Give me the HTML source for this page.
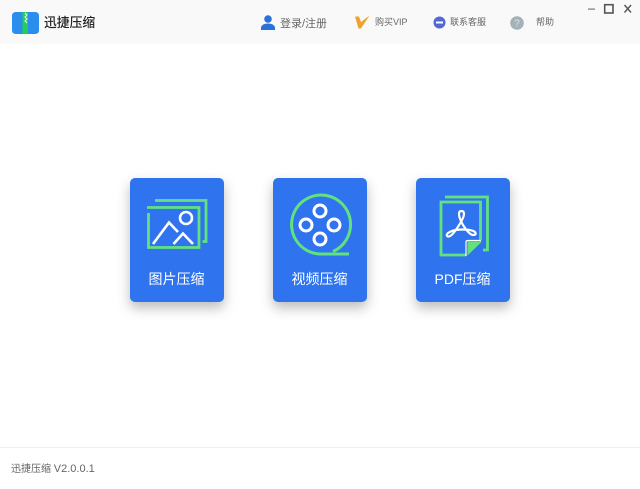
<!DOCTYPE html>
<html><head><meta charset="utf-8">
<style>
html,body{margin:0;padding:0;background:#fff}
body{width:640px;height:489px;position:relative;overflow:hidden;font-family:"Liberation Sans","Noto Sans CJK SC",sans-serif}
#w{position:absolute;left:0;top:0;width:640px;height:489px;background:#fff;filter:blur(.35px)}
.hd{position:absolute;left:0;top:0;width:640px;height:44px;background:#f9f9f9}
.t{position:absolute;white-space:nowrap;line-height:16px}
.nav{font-size:9px;color:#666;top:15px}
.card{position:absolute;top:178px;width:94px;height:124px;background:#2f74ee;border-radius:5px;box-shadow:0 6px 12px rgba(60,60,60,.34)}
.lb{position:absolute;left:0;width:94px;top:91px;text-align:center;color:#fff;font-size:14px;line-height:20px}
svg{position:absolute;overflow:visible}
.ft{position:absolute;left:0;top:447px;width:640px;height:1px;background:#efefef}
</style></head><body><div id="w">
<div class="hd"></div>

<svg style="left:12px;top:12px" width="27" height="22" viewBox="0 0 27 22">
<path d="M4 0H23Q27 0 27 4V18Q27 22 23 22H4Q0 22 0 18V4Q0 0 4 0Z" fill="#2a8eee"/>
<rect x="10.500" y="0" width="5.500" height="22" fill="#22cf55"/>
<path d="M13 1l2 2-2 2 2 2-2 2 2 2" stroke="#fff" stroke-width="1" fill="none"/>
</svg>
<div class="t" style="left:44px;top:15px;font-size:12.800px;font-weight:500;color:#222">迅捷压缩</div>

<svg style="left:261px;top:15px" width="14" height="15" viewBox="0 0 14 15">
<circle cx="7" cy="4" r="3.800" fill="#2a72d8"/>
<path d="M0 15V12.500Q1 8.500 7 8.500Q13 8.500 14 12.500V15Z" fill="#2a72d8"/>
</svg>
<div class="t nav" style="left:280px;font-size:11px;top:16px">登录/注册</div>

<svg style="left:355px;top:15px" width="15" height="14" viewBox="0 0 15 14">
<path d="M0 1.500L4 1.500L6 7L14.500 0.500L6 13.500H3.500Z" fill="#f0a22e"/>
</svg>
<div class="t nav" style="left:375px;top:14px">购买VIP</div>

<svg style="left:433px;top:16px" width="13" height="13" viewBox="0 0 13 13">
<circle cx="6.500" cy="6.500" r="6" fill="#5566d6"/>
<rect x="3" y="5.500" width="7" height="2" fill="#fff"/>
</svg>
<div class="t nav" style="left:450px;top:14px">联系客服</div>

<svg style="left:510px;top:16px" width="14" height="14" viewBox="0 0 14 14">
<circle cx="7" cy="7" r="6.800" fill="#a4b1b8"/>
<text x="7" y="10.500" font-size="10" fill="#dfe6ea" text-anchor="middle" font-family="Liberation Sans">?</text>
</svg>
<div class="t nav" style="left:536px;top:14px">帮助</div>

<svg style="left:585px;top:3px" width="50" height="12" viewBox="0 0 50 12">
<rect x="3" y="5.500" width="7" height="1.200" fill="#777"/>
<rect x="19.700" y="1.700" width="8.300" height="8.300" fill="none" stroke="#555" stroke-width="1.600"/>
<path d="M39.500 2L46 9.500M46 2L39.500 9.500" stroke="#555" stroke-width="1.400" fill="none"/>
</svg>

<div class="card" style="left:129.500px"><div class="lb">图片压缩</div></div>
<div class="card" style="left:272.500px"><div class="lb">视频压缩</div></div>
<div class="card" style="left:415.500px"><div class="lb">PDF压缩</div></div>

<svg style="left:0;top:0" width="640" height="489" viewBox="0 0 640 489" fill="none">
<path d="M155 200.500H206V241.500H202.500M147 207.500H199V247.500H148.500V213" stroke="#62e27e" stroke-width="2.800"/>
<path d="M153 244L169 222.500L178 232M173.500 244L183 233.500L193 244" stroke="#fff" stroke-width="2.600"/>
<circle cx="186" cy="218" r="6" stroke="#fff" stroke-width="2.600"/>

<path d="M349 254H320A29.500 29.500 0 1 1 333 251.500" stroke="#62e27e" stroke-width="3"/>
<circle cx="320" cy="211" r="6" stroke="#fff" stroke-width="3"/>
<circle cx="306" cy="225" r="6" stroke="#fff" stroke-width="3"/>
<circle cx="334" cy="225" r="6" stroke="#fff" stroke-width="3"/>
<circle cx="320" cy="239" r="6" stroke="#fff" stroke-width="3"/>

<path d="M445 197H487.500V250H483" stroke="#62e27e" stroke-width="2.800"/>
<path d="M466 255H441V202H480.500V240" stroke="#62e27e" stroke-width="2.800"/>
<path d="M467.500 255.500V241.500H482Z" fill="#62e27e"/>
<path d="M466 256V242Q466 240.500 468 240.500H481" stroke="#fff" stroke-width="1.200"/>
<path d="M459 214Q459 211 461.500 211Q464 211 464 214Q464 218 456.500 229Q451 237 448 236.500Q445.500 235.500 448 233Q453 229.500 462 229.500Q472 229.500 475 232Q477 235 473 235Q469 234.500 463 225Q459 218 459 214Z" stroke="#fff" stroke-width="2.200"/>
</svg>

<div class="ft"></div>
<div class="t" style="left:11px;top:461px;font-size:10px;color:#666">迅捷压缩 <span style="font-size:11px">V2.0.0.1</span></div>
</div></body></html>
